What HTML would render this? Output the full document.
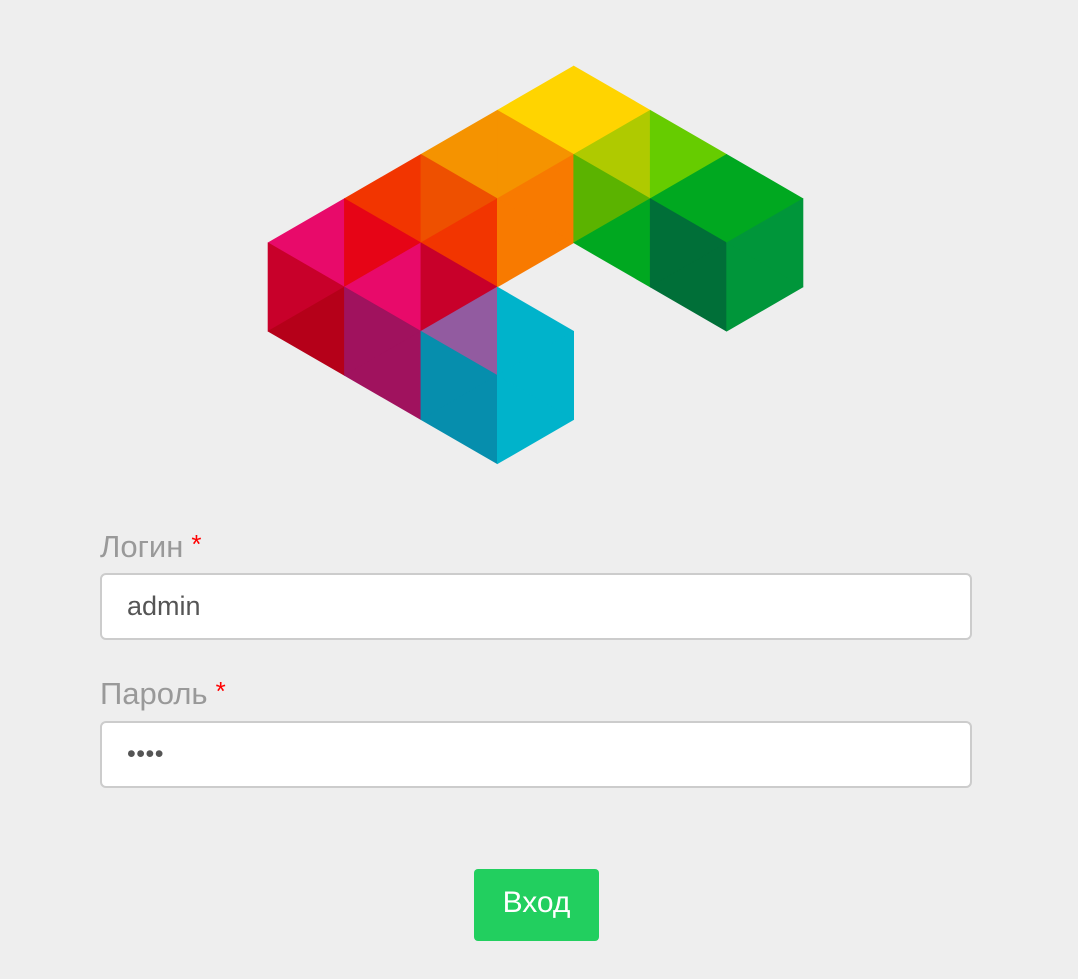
<!DOCTYPE html>
<html><head><meta charset="utf-8"><style>
html,body{margin:0;padding:0;background:#eeeeee;width:1078px;height:979px;overflow:hidden;font-family:"Liberation Sans",Arial,sans-serif;}
.lbl{position:absolute;left:100px;font-size:31px;color:#999;line-height:1;}
.lbl span{color:#ff0000;font-size:26px;margin-left:8px;position:relative;top:-4px;}
.inp{position:absolute;left:100px;background:#fff;border:2px solid #cccccc;border-radius:6px;font-size:27px;color:#555;line-height:63px;padding-left:25px;box-sizing:border-box;width:872px;height:67px;}
.btn{position:absolute;left:474px;top:869px;width:125px;height:72px;background:#22cf5f;border-radius:4px;color:#fff;font-size:30px;text-align:center;line-height:68px;}
</style></head><body>
<svg width="1078" height="500" style="position:absolute;left:0;top:0" stroke-width="0.6" stroke-linejoin="round">
<polygon points="344.4,198.6 268,242.8 344.4,287" fill="#e80a6a" stroke="#e80a6a"/>
<polygon points="268,242.8 268,331.2 344.4,287" fill="#c8002a" stroke="#c8002a"/>
<polygon points="344.4,287 344.4,375.4 268,331.2" fill="#b50019" stroke="#b50019"/>
<polygon points="420.9,154.4 344.4,198.6 420.9,242.8" fill="#f23500" stroke="#f23500"/>
<polygon points="344.4,198.6 344.4,287 420.9,242.8" fill="#e60416" stroke="#e60416"/>
<polygon points="420.9,242.8 420.9,331.2 344.4,287" fill="#e80a6a" stroke="#e80a6a"/>
<polygon points="344.4,287 344.4,375.4 420.9,331.2" fill="#a0125e" stroke="#a0125e"/>
<polygon points="420.9,331.2 420.9,419.6 344.4,375.4" fill="#a0125e" stroke="#a0125e"/>
<polygon points="497.3,110.2 420.9,154.4 497.3,198.6" fill="#f59300" stroke="#f59300"/>
<polygon points="420.9,154.4 420.9,242.8 497.3,198.6" fill="#ee5000" stroke="#ee5000"/>
<polygon points="497.3,198.6 497.3,287 420.9,242.8" fill="#f23500" stroke="#f23500"/>
<polygon points="420.9,242.8 420.9,331.2 497.3,287" fill="#c8002a" stroke="#c8002a"/>
<polygon points="497.3,287 497.3,375.4 420.9,331.2" fill="#925ba0" stroke="#925ba0"/>
<polygon points="420.9,331.2 420.9,419.6 497.3,375.4" fill="#068ead" stroke="#068ead"/>
<polygon points="497.3,375.4 497.3,463.8 420.9,419.6" fill="#068ead" stroke="#068ead"/>
<polygon points="573.7,66 497.3,110.2 573.7,154.4" fill="#ffd400" stroke="#ffd400"/>
<polygon points="497.3,110.2 497.3,198.6 573.7,154.4" fill="#f59300" stroke="#f59300"/>
<polygon points="573.7,154.4 573.7,242.8 497.3,198.6" fill="#f87a00" stroke="#f87a00"/>
<polygon points="497.3,198.6 497.3,287 573.7,242.8" fill="#f87a00" stroke="#f87a00"/>
<polygon points="497.3,287 497.3,375.4 573.7,331.2" fill="#00b3cb" stroke="#00b3cb"/>
<polygon points="573.7,331.2 573.7,419.6 497.3,375.4" fill="#00b3cb" stroke="#00b3cb"/>
<polygon points="497.3,375.4 497.3,463.8 573.7,419.6" fill="#00b3cb" stroke="#00b3cb"/>
<polygon points="573.7,66 573.7,154.4 650.2,110.2" fill="#ffd400" stroke="#ffd400"/>
<polygon points="650.2,110.2 650.2,198.6 573.7,154.4" fill="#afca00" stroke="#afca00"/>
<polygon points="573.7,154.4 573.7,242.8 650.2,198.6" fill="#5bb300" stroke="#5bb300"/>
<polygon points="650.2,198.6 650.2,287 573.7,242.8" fill="#00a820" stroke="#00a820"/>
<polygon points="650.2,110.2 650.2,198.6 726.6,154.4" fill="#66cc00" stroke="#66cc00"/>
<polygon points="726.6,154.4 726.6,242.8 650.2,198.6" fill="#00a820" stroke="#00a820"/>
<polygon points="650.2,198.6 650.2,287 726.6,242.8" fill="#006f38" stroke="#006f38"/>
<polygon points="726.6,242.8 726.6,331.2 650.2,287" fill="#006f38" stroke="#006f38"/>
<polygon points="726.6,154.4 726.6,242.8 803,198.6" fill="#00a820" stroke="#00a820"/>
<polygon points="803,198.6 803,287 726.6,242.8" fill="#00963a" stroke="#00963a"/>
<polygon points="726.6,242.8 726.6,331.2 803,287" fill="#00963a" stroke="#00963a"/>
</svg>
<div class="lbl" style="top:531px">Логин<span>*</span></div>
<div class="inp" style="top:573px">admin</div>
<div class="lbl" style="top:678px">Пароль<span>*</span></div>
<div class="inp" style="top:721px;font-size:25px;letter-spacing:0.5px">••••</div>
<div class="btn">Вход</div>
</body></html>
